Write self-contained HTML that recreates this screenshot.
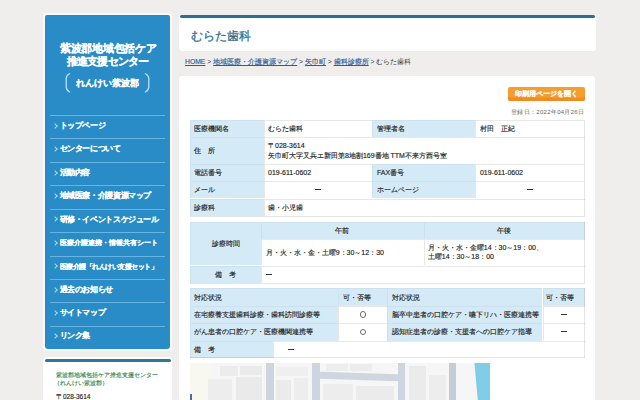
<!DOCTYPE html>
<html lang="ja">
<head>
<meta charset="utf-8">
<style>
*{box-sizing:border-box;margin:0;padding:0}
html,body{width:640px;height:400px;overflow:hidden}
body{background:#efeeec;font-family:"Liberation Sans",sans-serif;color:#333;position:relative}
.abs{position:absolute}
#side{left:43px;top:12.5px;width:129px;height:338.5px;background:#f6f8f9;border-radius:3px}
#sideblue{left:45px;top:14.5px;width:125px;height:334px;background:#298cc6;border-radius:2px 2px 3px 3px}
.st{position:absolute;left:45px;width:125px;text-align:center;color:#fff;font-weight:bold;white-space:nowrap;-webkit-text-stroke:0.15px #fff}
.br{position:absolute;width:4px;height:18.5px;border:1.2px solid #b5e1f8}
.sep{position:absolute;left:49.8px;width:115px;height:1.2px;background:#68b5e4}
.nav{position:absolute;left:52.6px;color:#fff;font-weight:bold;font-size:8px;letter-spacing:-0.38px;white-space:nowrap;line-height:10px;-webkit-text-stroke:0.1px #fff}
.nav i{display:inline-block;width:7px;height:10px;position:relative;vertical-align:top}
.nav i:before{content:"";position:absolute;left:0.3px;top:2.8px;width:3px;height:3px;border-right:1px solid #a6dbf7;border-top:1px solid #a6dbf7;transform:rotate(45deg)}
#low{left:43px;top:357.3px;width:129px;height:50px;background:#fff;border-radius:4px}
#lowbar{left:44.5px;top:358.5px;width:126px;height:3px;background:#2d76a0;border-radius:2px}
#hdr{left:178.5px;top:14.5px;width:417px;height:36.7px;background:#fff;border-radius:4px}
#hdrbar{left:179.5px;top:15px;width:415.5px;height:2.6px;background:#2c6f95;border-radius:1.5px}
#title{left:191px;top:27.5px;font-size:12px;color:#34708f;-webkit-text-stroke:0.3px #34708f;white-space:nowrap;line-height:16px}
#bc{left:185px;top:56.5px;font-size:6.8px;white-space:nowrap;color:#333;line-height:10px}
#bc a{color:#2d5d98;text-decoration:underline;-webkit-text-stroke:0.15px #2d5d98}
#cont{left:178.5px;top:76.3px;width:416.5px;height:330px;background:#fff;border-radius:4px}
#btn{left:508px;top:86.6px;width:77px;height:14.4px;background:#f69d30;box-shadow:inset 0 -3.5px 0 #ef8d24;border-radius:2px;color:#fff;font-size:7px;font-weight:bold;text-align:center;line-height:13px;white-space:nowrap;-webkit-text-stroke:0.1px #fff}
#date{left:450px;width:134.3px;top:108.3px;font-size:6px;letter-spacing:0.3px;color:#666;text-align:right;line-height:9px;white-space:nowrap}
.c{position:absolute;font-size:7px;line-height:9px;white-space:nowrap;color:#222;-webkit-text-stroke:0.15px #222;display:flex;align-items:center;box-shadow:inset 1px 1px 0 rgba(0,0,0,.065)}
.d{display:inline-block;width:6px;height:1px;background:#333;vertical-align:middle}
.o{display:inline-block;width:6.5px;height:6.5px;border:0.8px solid #6a6a6a;border-radius:50%}
.rb{position:absolute;background:rgba(0,0,0,.1)}
.h{background:#d5eaf7;box-shadow:inset 1px 1px 0 rgba(0,0,0,.04)}
.w{background:#fff;box-shadow:inset 1px 1px 0 rgba(0,0,0,.09)}
.ln{position:absolute;background:#e3e3e3}
.lb{position:absolute;background:#c9dded}
#map{left:190px;top:362.6px;width:300px;height:40px;background:#f6f6f6;overflow:hidden}
</style>
</head>
<body>
<div class="abs" id="side"></div>
<div class="abs" id="sideblue"></div>
<div class="st" style="top:41.6px;font-size:11px;line-height:13px;letter-spacing:-0.3px;padding-left:1.5px">紫波郡地域包括ケア</div>
<div class="st" style="top:54.8px;font-size:11px;line-height:13px;letter-spacing:-0.75px;padding-left:0px">推進支援センター</div>
<svg class="abs" style="left:65.3px;top:72.5px" width="6" height="20" viewBox="0 0 6 20"><path d="M4.6 0.8 Q1.2 2.6 1.2 5.5 L1.2 14 Q1.2 17 4.6 19" fill="none" stroke="#b5e1f8" stroke-width="1.3" stroke-linecap="round"/></svg>
<svg class="abs" style="left:144.2px;top:72.5px" width="6" height="20" viewBox="0 0 6 20"><path d="M1.4 0.8 Q4.8 2.6 4.8 5.5 L4.8 14 Q4.8 17 1.4 19" fill="none" stroke="#b5e1f8" stroke-width="1.3" stroke-linecap="round"/></svg>
<div class="st" style="top:77.5px;font-size:9px;line-height:10px">れんけい紫波郡</div>

<div class="sep" style="top:114.9px"></div>
<div class="sep" style="top:138.3px"></div>
<div class="sep" style="top:161.8px"></div>
<div class="sep" style="top:185.2px"></div>
<div class="sep" style="top:208.6px"></div>
<div class="sep" style="top:232.0px"></div>
<div class="sep" style="top:255.5px"></div>
<div class="sep" style="top:278.9px"></div>
<div class="sep" style="top:302.3px"></div>
<div class="sep" style="top:325.8px"></div>

<div class="nav" style="top:120.9px"><i></i>トップページ</div>
<div class="nav" style="top:144.3px"><i></i>センターについて</div>
<div class="nav" style="top:167.8px"><i></i>活動内容</div>
<div class="nav" style="top:191.2px"><i></i>地域医療・介護資源マップ</div>
<div class="nav" style="top:214.6px"><i></i>研修・イベントスケジュール</div>
<div class="nav" style="top:238.0px;font-size:7px;letter-spacing:0;-webkit-text-stroke:0.1px #fff"><i></i>医療介護連携・情報共有シート</div>
<div class="nav" style="top:261.5px;font-size:7px;letter-spacing:-0.5px;-webkit-text-stroke:0.1px #fff"><i></i>医療介護「れんけい支援セット」</div>
<div class="nav" style="top:284.9px"><i></i>過去のお知らせ</div>
<div class="nav" style="top:308.3px"><i></i>サイトマップ</div>
<div class="nav" style="top:331.3px"><i></i>リンク集</div>

<div class="abs" id="low"></div>
<div class="abs" id="lowbar"></div>
<div class="abs" style="left:56px;top:370.5px;font-size:6px;line-height:9px;color:#2c8a55;-webkit-text-stroke:0.15px #2c8a55;white-space:nowrap">紫波郡地域包括ケア推進支援センター</div>
<div class="abs" style="left:54px;top:379px;font-size:6px;line-height:9px;color:#2c8a55;-webkit-text-stroke:0.15px #2c8a55;white-space:nowrap">（れんけい紫波郡）</div>
<div class="abs" style="left:56px;top:391.7px;font-size:6.5px;line-height:9px;color:#222;-webkit-text-stroke:0.15px #222;white-space:nowrap">〒028-3614</div>

<div class="abs" id="hdr"></div>
<div class="abs" id="hdrbar"></div>
<div class="abs" id="title">むらた歯科</div>
<div class="abs" id="bc"><a>HOME</a> &gt; <a>地域医療・介護資源マップ</a> &gt; <a>矢巾町</a> &gt; <a>歯科診療所</a> &gt; むらた歯科</div>

<div class="abs" id="cont"></div>
<div class="abs" id="btn">印刷用ページを開く</div>
<div class="abs" id="date">登録日：2022年04月26日</div>

<!-- TABLE 1 -->
<div class="c h" style="left:190px;top:120px;width:73.5px;height:17.2px;padding-left:4px">医療機関名</div>
<div class="c w" style="left:263.5px;top:120px;width:108.7px;height:17.2px;padding-left:4.5px">むらた歯科</div>
<div class="c h" style="left:372.2px;top:120px;width:103.2px;height:17.2px;padding-left:4.8px">管理者名</div>
<div class="c w" style="left:475.4px;top:120px;width:109.1px;height:17.2px;padding-left:4.5px">村田　正紀</div>

<div class="c h" style="left:190px;top:137.2px;width:73.5px;height:26.8px;padding-left:4px">住　所</div>
<div class="c w" style="left:263.5px;top:137.2px;width:321px;height:26.8px;padding-left:4.5px;line-height:9.2px">〒028-3614<br>矢巾町大字又兵エ新田第8地割169番地 TTM不来方西号室</div>

<div class="c h" style="left:190px;top:164px;width:73.5px;height:17.2px;padding-left:4px">電話番号</div>
<div class="c w" style="left:263.5px;top:164px;width:108.7px;height:17.2px;padding-left:4.5px">019-611-0602</div>
<div class="c h" style="left:372.2px;top:164px;width:103.2px;height:17.2px;padding-left:4.8px">FAX番号</div>
<div class="c w" style="left:475.4px;top:164px;width:109.1px;height:17.2px;padding-left:4.5px">019-611-0602</div>

<div class="c h" style="left:190px;top:181.2px;width:73.5px;height:17.3px;padding-left:4px">メール</div>
<div class="c w" style="left:263.5px;top:181.2px;width:108.7px;height:17.3px;justify-content:center"><span class="d"></span></div>
<div class="c h" style="left:372.2px;top:181.2px;width:103.2px;height:17.3px;padding-left:4.8px">ホームページ</div>
<div class="c w" style="left:475.4px;top:181.2px;width:109.1px;height:17.3px;justify-content:center"><span class="d"></span></div>

<div class="c h" style="left:190px;top:198.5px;width:73.5px;height:17.5px;padding-left:4px">診療科</div>
<div class="c w" style="left:263.5px;top:198.5px;width:321px;height:17.5px;padding-left:4.5px">歯・小児歯</div>

<!-- TABLE 2 -->
<div class="c h" style="left:190px;top:221.6px;width:71px;height:43.9px;justify-content:center;padding-bottom:0px">診療時間</div>
<div class="c h" style="left:261px;top:221.6px;width:162.5px;height:17.8px;justify-content:center">午前</div>
<div class="c h" style="left:423.5px;top:221.6px;width:161px;height:17.8px;justify-content:center">午後</div>
<div class="c w" style="left:261px;top:239.4px;width:162.5px;height:26.1px;padding-left:4.7px">月・火・水・金・土曜9：30～12：30</div>
<div class="c w" style="left:423.5px;top:239.4px;width:161px;height:26.1px;padding-left:4.3px;line-height:9.6px">月・火・水・金曜14：30～19：00、<br>土曜14：30～18：00</div>
<div class="c h" style="left:190px;top:265.5px;width:71px;height:17.5px;justify-content:center">備　考</div>
<div class="c w" style="left:261px;top:265.5px;width:323.5px;height:17.5px;padding-left:4.7px"><span class="d"></span></div>

<!-- TABLE 3 -->
<div class="c h" style="left:190px;top:288.4px;width:148.4px;height:17.4px;padding-left:4.4px">対応状況</div>
<div class="c h" style="left:338.4px;top:288.4px;width:48.8px;height:17.4px;padding-left:4.3px">可・否等</div>
<div class="c h" style="left:387.2px;top:288.4px;width:155.3px;height:17.4px;padding-left:4.4px">対応状況</div>
<div class="c h" style="left:542.5px;top:288.4px;width:42px;height:17.4px;padding-left:3.6px">可・否等</div>

<div class="c h" style="left:190px;top:305.8px;width:148.4px;height:17.2px;padding-left:4.4px">在宅療養支援歯科診療・歯科訪問診療等</div>
<div class="c w" style="left:338.4px;top:305.8px;width:48.8px;height:17.2px;justify-content:center"><span class="o"></span></div>
<div class="c h" style="left:387.2px;top:305.8px;width:155.3px;height:17.2px;padding-left:4.4px">脳卒中患者の口腔ケア・嚥下リハ・医療連携等</div>
<div class="c w" style="left:542.5px;top:305.8px;width:42px;height:17.2px;justify-content:center"><span class="d"></span></div>

<div class="c h" style="left:190px;top:323px;width:148.4px;height:17.5px;padding-left:4.4px">がん患者の口腔ケア・医療機関連携等</div>
<div class="c w" style="left:338.4px;top:323px;width:48.8px;height:17.5px;justify-content:center"><span class="o"></span></div>
<div class="c h" style="left:387.2px;top:323px;width:155.3px;height:17.5px;padding-left:4.4px">認知症患者の診療・支援者への口腔ケア指導</div>
<div class="c w" style="left:542.5px;top:323px;width:42px;height:17.5px;justify-content:center"><span class="d"></span></div>

<div class="c h" style="left:190px;top:340.5px;width:82.5px;height:17.2px;padding-left:4px">備　考</div>
<div class="c w" style="left:272.5px;top:340.5px;width:312px;height:17.2px;padding-left:15.5px"><span class="d"></span></div>

<div class="rb" style="left:584px;top:120px;width:1px;height:96px"></div>
<div class="rb" style="left:190px;top:215.5px;width:395px;height:1px"></div>
<div class="rb" style="left:584px;top:221.6px;width:1px;height:61.4px"></div>
<div class="rb" style="left:190px;top:282.5px;width:395px;height:1px"></div>
<div class="rb" style="left:584px;top:288.4px;width:1px;height:69.3px"></div>
<div class="rb" style="left:190px;top:357.2px;width:395px;height:1px"></div>
<div class="abs" id="map"><div class="abs" style="left:0;top:0;width:300px;height:40px;filter:blur(0.5px)">
<div class="abs" style="left:0;top:0;width:22px;height:40px;background:#f8f7f0"></div>
<div class="abs" style="left:30px;top:3px;width:18px;height:10px;background:#ececec"></div>
<div class="abs" style="left:50px;top:3px;width:22px;height:9px;background:#eaeaea"></div>
<div class="abs" style="left:18px;top:16px;width:24px;height:30px;background:#ededed"></div>
<div class="abs" style="left:46px;top:14px;width:26px;height:30px;background:#eaeaea"></div>
<div class="abs" style="left:86px;top:4px;width:32px;height:9px;background:#efefef"></div>
<div class="abs" style="left:86px;top:17px;width:15px;height:25px;background:#ebebeb"></div>
<div class="abs" style="left:104px;top:15px;width:14px;height:25px;background:#ededed"></div>
<div class="abs" style="left:133px;top:21px;width:30px;height:25px;background:#ededed"></div>
<div class="abs" style="left:166px;top:23px;width:38px;height:25px;background:#ebebeb"></div>
<div class="abs" style="left:136px;top:1px;width:22px;height:7px;background:#eeeeee"></div>
<div class="abs" style="left:160px;top:1px;width:22px;height:7px;background:#ececec"></div>
<div class="abs" style="left:219px;top:3px;width:17px;height:45px;background:#ebebeb"></div>
<div class="abs" style="left:239px;top:12px;width:17px;height:45px;background:#ededed"></div>
<div class="abs" style="left:75.6px;top:0;width:8.8px;height:40px;background:#cdd5de"></div>
<div class="abs" style="left:121.6px;top:0;width:8.1px;height:40px;background:#cdd5de"></div>
<div class="abs" style="left:129.7px;top:10.8px;width:78px;height:7px;background:#cfd6df;transform:skewY(2deg)"></div>
<div class="abs" style="left:207.6px;top:0;width:7.8px;height:40px;background:#cdd5de"></div>
<div class="abs" style="left:259.4px;top:0;width:6.2px;height:40px;background:#c6cbd5"></div>
<div class="abs" style="left:284.4px;top:0;width:20px;height:40px;background:#80cde6;clip-path:polygon(0 0,100% 0,100% 100%,3.6px 100%)"></div>
<div class="abs" style="left:0;top:31px;width:1.5px;height:9px;background:#4a6aa8"></div>
</div>
</div>
</body>
</html>
